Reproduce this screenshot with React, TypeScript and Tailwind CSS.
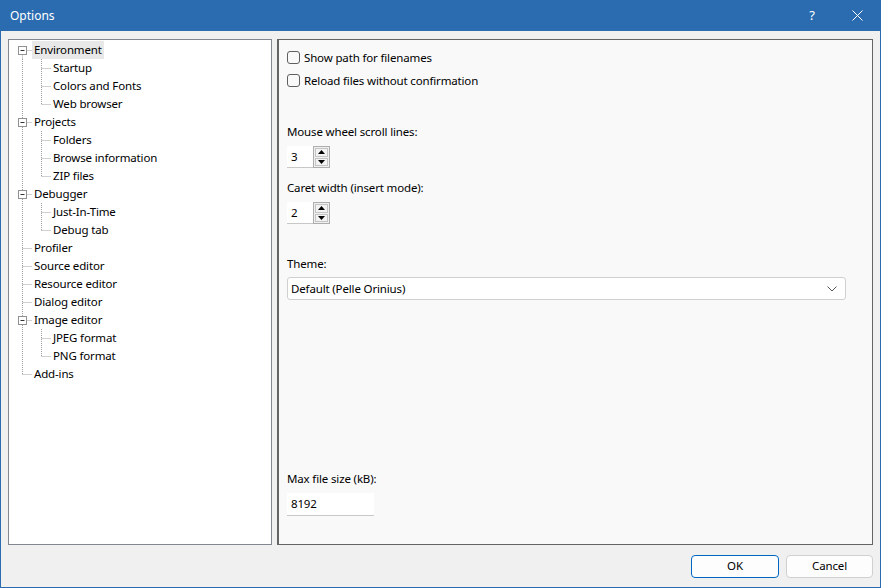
import React from "react";

type Cell = "first" | "mid" | "last" | "pipe" | "cmid" | "clast";

type Node = {
  label: string;
  cells: Cell[];
  box?: boolean;
  selected?: boolean;
};

const tree: Node[] = [
  { label: "Environment", cells: ["first"], box: true, selected: true },
  { label: "Startup", cells: ["pipe", "cmid"] },
  { label: "Colors and Fonts", cells: ["pipe", "cmid"] },
  { label: "Web browser", cells: ["pipe", "clast"] },
  { label: "Projects", cells: ["mid"], box: true },
  { label: "Folders", cells: ["pipe", "cmid"] },
  { label: "Browse information", cells: ["pipe", "cmid"] },
  { label: "ZIP files", cells: ["pipe", "clast"] },
  { label: "Debugger", cells: ["mid"], box: true },
  { label: "Just-In-Time", cells: ["pipe", "cmid"] },
  { label: "Debug tab", cells: ["pipe", "clast"] },
  { label: "Profiler", cells: ["mid"] },
  { label: "Source editor", cells: ["mid"] },
  { label: "Resource editor", cells: ["mid"] },
  { label: "Dialog editor", cells: ["mid"] },
  { label: "Image editor", cells: ["mid"], box: true },
  { label: "JPEG format", cells: ["pipe", "cmid"] },
  { label: "PNG format", cells: ["pipe", "clast"] },
  { label: "Add-ins", cells: ["last"] },
];

const dot = { stroke: "#a0a0a0", strokeWidth: 1, strokeDasharray: "1 1" };

const Connector = ({ kind, box }: { kind: Cell; box?: boolean }) => {
  const x = 9.5;
  const c = 9.5;
  return (
    <svg width="19" height="18" className="shrink-0">
      {kind === "first" && <line x1={x} y1={c} x2={x} y2={18} {...dot} />}
      {(kind === "mid" || kind === "pipe" || kind === "cmid") && (
        <line x1={x} y1={0} x2={x} y2={18} {...dot} />
      )}
      {(kind === "last" || kind === "clast") && (
        <line x1={x} y1={0} x2={x} y2={c} {...dot} />
      )}
      {kind !== "pipe" && <line x1={x} y1={c} x2={19} y2={c} {...dot} />}
      {box && (
        <g>
          <rect x={5.5} y={5.5} width={8} height={8} fill="#fff" stroke="#919191" />
          <line x1={7.5} y1={9.5} x2={11.5} y2={9.5} stroke="#333" />
        </g>
      )}
    </svg>
  );
};

const Checkbox = ({ label }: { label: string }) => (
  <div className="flex h-[23px] items-center gap-[4px]">
    <div className="h-[13px] w-[13px] rounded-[3px] border border-[#5f5f5f] bg-[#f9f9f9]" />
    <span>{label}</span>
  </div>
);

const Spinner = ({ value }: { value: string }) => (
  <div className="flex h-[22px] w-[44px]">
    <div className="flex w-[26px] items-center border-b border-[#c8c8c8] bg-white pl-[4px]">{value}</div>
    <div className="flex w-[17px] flex-col gap-px border border-[#adadad] bg-[#f0f0f0] p-px">
      <div className="flex flex-1 items-center justify-center border border-[#c4c4c4] bg-[#f3f3f3]">
        <svg width="7" height="4"><polygon points="3.5,0 7,4 0,4" fill="#000" /></svg>
      </div>
      <div className="flex flex-1 items-center justify-center border border-[#c4c4c4] bg-[#f3f3f3]">
        <svg width="7" height="4"><polygon points="0,0 7,0 3.5,4" fill="#000" /></svg>
      </div>
    </div>
  </div>
);

export default function App() {
  return (
    <div
      className="flex h-[588px] w-[881px] flex-col border-x border-b border-[#2b6cb1] bg-[#f0f0f0] text-[11.5px] tracking-[-0.15px] text-black"
      style={{ fontFamily: '"Noto Sans", "Liberation Sans", sans-serif' }}
    >
      <div className="flex h-[31px] shrink-0 items-center bg-[#2b6cb1] pl-[9px] text-[12px] tracking-normal text-white">
        <span className="flex-1">Options</span>
        <span className="w-[44px] text-center text-[13px]">?</span>
        <div className="flex w-[46px] items-center justify-center">
          <svg width="11" height="11">
            <path d="M0.5 0.5 L10.5 10.5 M10.5 0.5 L0.5 10.5" stroke="#fff" strokeWidth="1" />
          </svg>
        </div>
      </div>

      <div className="flex flex-1 gap-[5px] px-[7px] pt-[8px]">
        <div className="w-[264px] border border-[#828790] bg-white pl-[4px] pt-[1px]">
          {tree.map((n) => (
            <div key={n.label} className="flex h-[18px] items-center">
              {n.cells.map((c, i) => (
                <Connector key={i} kind={c} box={i === 0 && n.box} />
              ))}
              <span
                className={`flex h-[18px] items-center px-[2px] leading-none ${
                  n.selected ? "bg-[#e8e8e8]" : ""
                }`}
              >
                {n.label}
              </span>
            </div>
          ))}
        </div>

        <div className="flex flex-1 flex-col border border-l-2 border-[#646464] bg-[#f9f9f9] pb-[28px] pl-[8px] pr-[26px] pt-[6px]">
          <Checkbox label="Show path for filenames" />
          <Checkbox label="Reload files without confirmation" />

          <div className="mt-[31px] h-[16px] pt-px leading-[16px]">Mouse wheel scroll lines:</div>
          <div className="mt-[7px]">
            <Spinner value="3" />
          </div>
          <div className="mt-[11px] h-[16px] pt-px leading-[16px]">Caret width (insert mode):</div>
          <div className="mt-[7px]">
            <Spinner value="2" />
          </div>

          <div className="mt-[31px] h-[16px] pt-px leading-[16px]">Theme:</div>
          <div className="mt-[6px] flex h-[23px] items-center rounded-[3px] border border-[#d0d0d0] bg-white pl-[3px] pr-[8px]">
            <span className="flex-1">Default (Pelle Orinius)</span>
            <svg width="10" height="6">
              <path d="M0.5 0.5 L5 5 L9.5 0.5" stroke="#555" fill="none" />
            </svg>
          </div>

          <div className="mt-auto h-[16px] pt-px leading-[16px]">Max file size (kB):</div>
          <div className="mt-[7px] flex h-[23px] w-[87px] items-center border-b border-[#c8c8c8] bg-white pl-[4px]">
            8192
          </div>
        </div>
      </div>

      <div className="flex h-[42px] shrink-0 items-center justify-end gap-[7px] pr-[7px]">
        <button className="h-[23px] w-[88px] rounded-[4px] border border-[#0067c0] bg-[#fdfdfd]">
          OK
        </button>
        <button className="h-[23px] w-[87px] rounded-[4px] border border-[#d0d0d0] bg-[#fdfdfd]">
          Cancel
        </button>
      </div>
    </div>
  );
}
